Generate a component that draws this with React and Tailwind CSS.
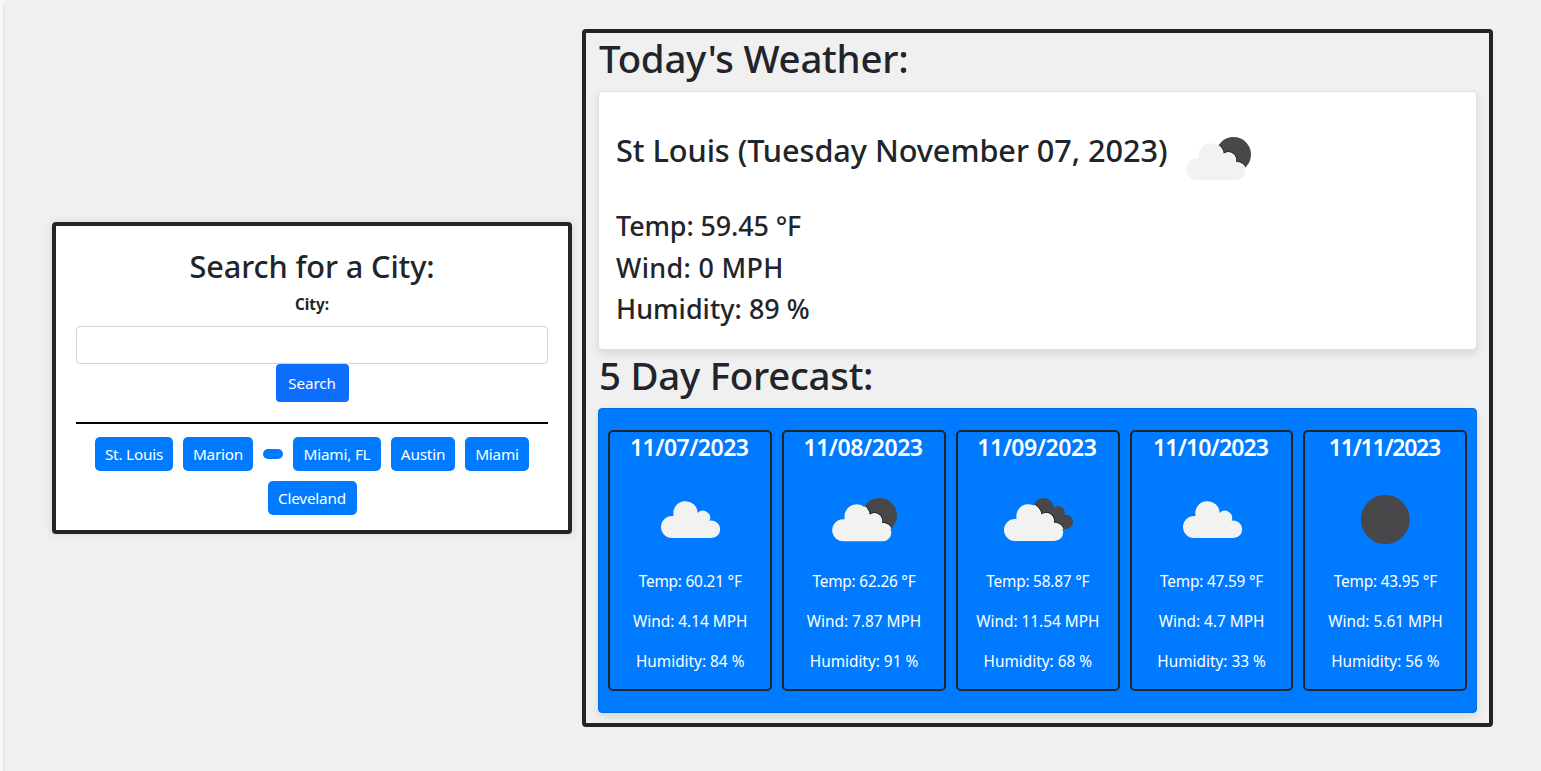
import React from "react";

const CLOUD =
  "M32 68a11 11 0 0 1 0-22L33.6 46A12.2 12.2 0 1 1 57.7 42.9A7.3 7.3 0 0 1 69.6 50.8A8.7 8.7 0 1 1 71.3 68Z";

function WeatherIcon({ kind }) {
  return (
    <svg viewBox="0 0 100 100" className="size-[100px] shrink-0">
      {kind === "clear" && <circle cx="50.3" cy="49.5" r="24.5" fill="#48484a" />}
      {kind === "cloud" && <path d={CLOUD} fill="#f2f2f0" />}
      {kind === "few" && (
        <>
          <defs>
            <clipPath id="disc">
              <circle cx="65.5" cy="45.5" r="17.5" />
            </clipPath>
          </defs>
          <circle cx="65.5" cy="45.5" r="17.5" fill="#48484a" />
          <g clipPath="url(#disc)">
            <path d={CLOUD} transform="translate(-2.5 3)" fill="#fff" stroke="#26262a" strokeWidth="3" />
            <path d={CLOUD} transform="translate(-2.5 3)" fill="#fff" stroke="#fff" strokeWidth="1.2" />
          </g>
          <path d={CLOUD} transform="translate(-2.8 3.2)" fill="#f2f2f0" />
        </>
      )}
      {kind === "broken" && (
        <>
          <defs>
            <clipPath id="darkCloud">
              <circle cx="55.7" cy="38.3" r="10.3" />
              <circle cx="70.3" cy="42.5" r="6.5" />
              <circle cx="77.8" cy="51.9" r="7.2" />
              <path d="M56 38h14l8 14v7H60Z" />
            </clipPath>
          </defs>
          <g clipPath="url(#darkCloud)">
            <rect x="40" y="20" width="50" height="45" fill="#48484a" />
            <path d={CLOUD} transform="translate(-4.8 2.8)" fill="#fff" stroke="#26262a" strokeWidth="3" />
            <path d={CLOUD} transform="translate(-4.8 2.8)" fill="#fff" stroke="#fff" strokeWidth="1.2" />
          </g>
          <path d={CLOUD} transform="translate(-5 3)" fill="#f2f2f0" />
        </>
      )}
    </svg>
  );
}

const HISTORY = [
  { name: "St. Louis", size: "h-[34px] w-[78px]" },
  { name: "Marion", size: "h-[34px] w-[70px]" },
  { name: "", size: "h-[10px] w-[20px]" },
  { name: "Miami, FL", size: "h-[34px] w-[88px]" },
  { name: "Austin", size: "h-[34px] w-[64px]" },
  { name: "Miami", size: "h-[34px] w-[64px]" },
  { name: "Cleveland", size: "h-[34px] w-[89px]" },
];

const DAYS = [
  { date: "11/07/2023", tracking: "tracking-[-0.5px]", kind: "cloud", temp: "60.21", wind: "4.14", humidity: 84 },
  { date: "11/08/2023", tracking: "tracking-[-0.45px]", kind: "few", temp: "62.26", wind: "7.87", humidity: 91 },
  { date: "11/09/2023", tracking: "tracking-[-0.45px]", kind: "broken", temp: "58.87", wind: "11.54", humidity: 68 },
  { date: "11/10/2023", tracking: "tracking-[-0.85px]", kind: "cloud", temp: "47.59", wind: "4.7", humidity: 33 },
  { date: "11/11/2023", tracking: "tracking-[-1.25px]", kind: "clear", temp: "43.95", wind: "5.61", humidity: 56 },
];

function SearchPanel() {
  return (
    <section className="flex h-[312px] w-[520px] shrink-0 flex-col rounded-[4px] border-4 border-[#212529] bg-white px-5 pt-[21px] text-center shadow-[0_0_10px_rgba(0,0,0,0.1)]">
      <h2 className="h-[45px] text-[30.7px] leading-[38px] font-medium tracking-[-0.1px]">Search for a City:</h2>
      <label htmlFor="city" className="h-[34px] text-[15.2px] leading-[24px] font-bold">City:</label>
      <input id="city" className="h-[38px] w-full shrink-0 rounded-[4px] border border-[#ced4da] bg-white px-3" />
      <button className="h-[38px] w-[73px] shrink-0 self-center rounded-[4px] bg-[#0d6efd] text-[15.2px] tracking-[-0.1px] text-white">
        Search
      </button>
      <div className="mt-5 h-0.5 shrink-0 bg-black" />
      <div className="mt-[8px] flex flex-wrap items-center justify-center">
        {HISTORY.map(({ name, size }, i) => (
          <button
            key={i}
            className={`m-[5px] flex items-center justify-center rounded-[5px] bg-[#007bff] text-[15.3px] tracking-[-0.2px] whitespace-nowrap text-white ${size}`}
          >
            {name}
          </button>
        ))}
      </div>
    </section>
  );
}

function DayCard({ day }) {
  return (
    <article className="flex min-w-0 flex-1 flex-col items-center rounded-[5px] border-2 border-[#212529] text-white">
      <h3 className={`mt-px pr-[2px] text-[23px] leading-[29px] font-semibold ${day.tracking}`}>{day.date}</h3>
      <div className="mt-[8px]">
        <WeatherIcon kind={day.kind} />
      </div>
      <div className="flex flex-col gap-4 text-center text-[15.36px] leading-6 whitespace-nowrap">
        <p className="tracking-[-0.2px]">Temp: {day.temp} °F</p>
        <p>Wind: {day.wind} MPH</p>
        <p>Humidity: {day.humidity} %</p>
      </div>
    </article>
  );
}

export default function App() {
  return (
    <div className="h-[771px] w-[1541px] overflow-hidden bg-[#f8f8f8] pl-[3px] font-['Noto_Sans',sans-serif] text-[#212529]">
      <main className="flex h-full items-center gap-[10px] rounded-tl-[8px] border-l border-[#e2e2e2] bg-[#f0f0f0] pb-[15px] pl-[48px]">
        <SearchPanel />
        <section className="h-[698px] w-[911px] shrink-0 rounded-[4px] border-4 border-[#212529] px-[12px] pt-px">
          <h1 className="h-[57px] pl-px text-[38.4px] leading-[48px] font-medium tracking-[-0.25px]">Today's Weather:</h1>
          <div className="h-[259px] rounded-[4px] border border-[#dfdfdf] bg-white pr-4 pl-[17px] pt-[17px] shadow-[0_4px_8px_rgba(0,0,0,0.1)]">
            <div className="flex h-[96px]">
              <h2 className="w-[552px] text-[30.7px] leading-[82px] font-medium tracking-[-0.06px] whitespace-nowrap">
                St Louis (Tuesday November 07, 2023)
              </h2>
              <WeatherIcon kind="few" />
            </div>
            <div className="text-[26.9px] leading-[41.5px] font-medium">
              <p className="tracking-[-0.1px]">Temp: 59.45 °F</p>
              <p className="tracking-[0.35px]">Wind: 0 MPH</p>
              <p className="tracking-[0.05px]">Humidity: 89 %</p>
            </div>
          </div>
          <h1 className="h-[58px] pt-px pl-px text-[38.4px] leading-[48px] font-medium tracking-[-0.25px]">5 Day Forecast:</h1>
          <div className="flex h-[305px] gap-[10px] rounded-[4px] border border-[#006fe6] bg-[#007bff] py-[21px] pr-[8.7px] pl-[9.3px] shadow-[0_4px_8px_rgba(0,0,0,0.1)]">
            {DAYS.map((day) => (
              <DayCard key={day.date} day={day} />
            ))}
          </div>
        </section>
      </main>
    </div>
  );
}
